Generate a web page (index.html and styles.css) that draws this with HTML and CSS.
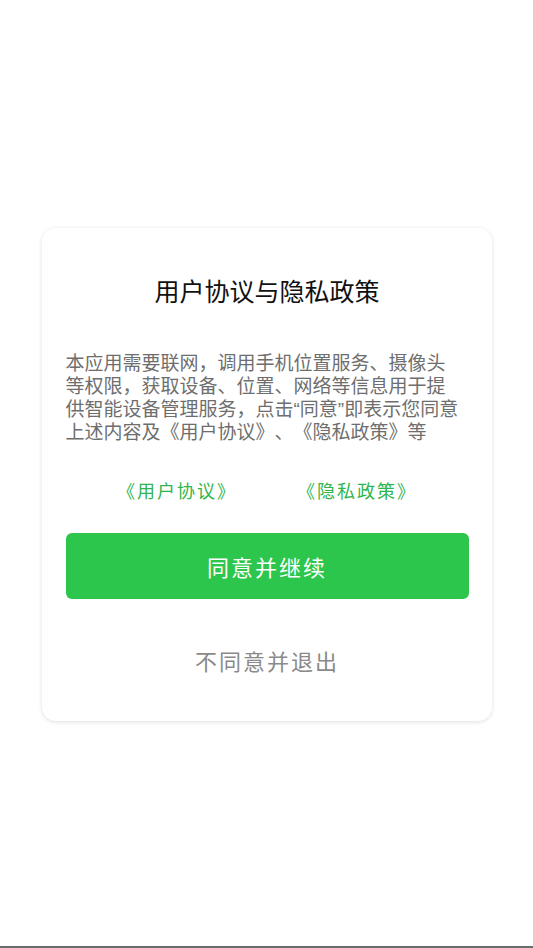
FILE: index.html
```html
<!DOCTYPE html>
<html lang="zh-CN">

<head>
    <meta charset="utf-8">
    <meta name="viewport" content="width=device-width, initial-scale=1.0">
    <title>用户协议与隐私政策</title>
    <link rel="stylesheet" href="styles.css">
</head>

<body>
    <main class="scherm">
        <section class="dialog">
            <h1 class="titel">用户协议与隐私政策</h1>
            <p class="tekst">本应用需要联网，调用手机位置服务、摄像头等权限，获取设备、位置、网络等信息用于提供智能设备管理服务，点击“同意”即表示您同意上述内容及《用户协议》、《隐私政策》等</p>
            <div class="links">
                <a class="link" href="#">《用户协议》</a>
                <a class="link" href="#">《隐私政策》</a>
            </div>
            <button class="knap">同意并继续</button>
            <button class="afvis">不同意并退出</button>
        </section>
    </main>
    <div class="bundlinje"></div>
</body>

</html>
```

FILE: styles.css
```css
* {
    box-sizing: border-box;
}

body {
    margin: 0;
    height: 100vh;
    display: flex;
    flex-direction: column;
    background: #fff;
    font-family: "Noto Sans CJK SC", "Noto Sans", sans-serif;
}

.scherm {
    flex: 1;
    display: flex;
    align-items: center;
    justify-content: center;
}

.dialog {
    width: 450px;
    margin-top: 2px;
    padding: 44px 23px 46px 24px;
    background: #fff;
    border-radius: 14px;
    box-shadow: 0 1px 4px rgba(0, 0, 0, .13);
    display: flex;
    flex-direction: column;
    align-items: center;
}

.titel {
    margin: 0;
    font-size: 25px;
    font-weight: 400;
    line-height: 36px;
    color: #111;
}

/* latijnse font eerst, zodat de aanhalingstekens smal blijven */
.tekst {
    align-self: flex-start;
    width: 396px;
    margin: 44px 0 0;
    font-family: "Liberation Sans", "Noto Sans CJK SC", sans-serif;
    font-size: 19px;
    line-height: 23px;
    color: #6e6e6e;
    text-spacing-trim: space-all;
}

.links {
    display: flex;
    justify-content: center;
    gap: 60px;
    margin-top: 34px;
}

.link {
    font-size: 18px;
    line-height: 24px;
    letter-spacing: 2px;
    color: #30b54e;
    text-decoration: none;
}

.knap {
    width: 100%;
    height: 66px;
    margin-top: 31px;
    border: none;
    border-radius: 6px;
    background: #2bc64b;
    color: #fff;
    font-family: inherit;
    font-size: 22px;
    letter-spacing: 2px;
}

.afvis {
    margin-top: 46px;
    padding: 0;
    border: none;
    background: none;
    font-family: inherit;
    font-size: 22px;
    line-height: 30px;
    letter-spacing: 2px;
    color: #8a8a8a;
}

.bundlinje {
    height: 2px;
    background: #6b6b6b;
}
```
